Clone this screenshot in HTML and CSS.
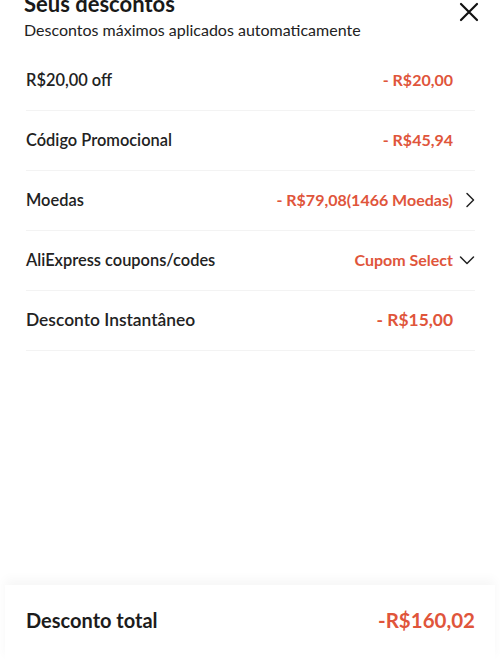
FILE: index.html
```html
<!DOCTYPE html>
<html lang="pt-BR">
<head>
<meta charset="utf-8">
<link rel="stylesheet" href="styles.css">
</head>
<body>
<div class="sheet">
  <header class="head">
    <div class="head-text">
      <h1 class="title">Seus descontos</h1>
      <p class="subtitle">Descontos máximos aplicados automaticamente</p>
    </div>
    <button class="close" aria-label="Fechar">
      <svg width="20" height="20" viewBox="0 0 20 20"><path d="M2 2 L18 18 M18 2 L2 18" stroke="#111" stroke-width="2.2" fill="none" stroke-linecap="round"/></svg>
    </button>
  </header>
  <main class="list">
    <div class="row">
      <span class="label">R$20,00 off</span>
      <span class="value">- R$20,00</span>
      <span class="icon"></span>
    </div>
    <div class="row">
      <span class="label">Código Promocional</span>
      <span class="value">- R$45,94</span>
      <span class="icon"></span>
    </div>
    <div class="row">
      <span class="label">Moedas</span>
      <span class="value">- R$79,08(1466 Moedas)</span>
      <span class="icon"><svg width="10" height="16" viewBox="0 0 10 16"><path d="M2 1.5 L8.5 8 L2 14.5" stroke="#222" stroke-width="1.5" fill="none" stroke-linecap="round" stroke-linejoin="round"/></svg></span>
    </div>
    <div class="row">
      <span class="label">AliExpress coupons/codes</span>
      <span class="value">Cupom Select</span>
      <span class="icon"><svg width="16" height="10" viewBox="0 0 16 10"><path d="M1.5 2 L8 8.5 L14.5 2" stroke="#222" stroke-width="1.5" fill="none" stroke-linecap="round" stroke-linejoin="round"/></svg></span>
    </div>
    <div class="row">
      <span class="label label-lg">Desconto Instantâneo</span>
      <span class="value value-lg">- R$15,00</span>
      <span class="icon"></span>
    </div>
  </main>
  <footer class="foot">
    <span class="foot-label">Desconto total</span>
    <span class="foot-value">-R$160,02</span>
  </footer>
</div>
</body>
</html>
```
FILE: styles.css
```css
* { box-sizing: border-box; }
html, body { margin: 0; padding: 0; background: #fff; }
body {
  font-family: "Lato", "Open Sans", "Liberation Sans", sans-serif;
  color: #222;
}
.sheet {
  width: 500px;
  height: 661px;
  display: flex;
  flex-direction: column;
  overflow: hidden;
}
.head {
  display: flex;
  justify-content: space-between;
  align-items: flex-start;
  padding: 0 20px 0 24px;
  margin-top: -8px;
}
.title {
  margin: 0;
  font-size: 22px;
  line-height: 24px;
  font-weight: 700;
  color: #191919;
}
.subtitle {
  margin: 3px 0 0;
  font-size: 16px;
  line-height: 22px;
  color: #222;
}
.close {
  border: 0;
  background: none;
  padding: 0;
  margin-top: 9px;
  width: 22px;
  height: 22px;
  display: flex;
  align-items: center;
  justify-content: center;
}
.list {
  flex: 1;
  padding: 10px 25px 0 26px;
}
.row {
  height: 60px;
  display: flex;
  align-items: center;
  border-bottom: 1px solid #f3f3f3;
  padding-bottom: 2px;
}
.label {
  flex: 1;
  font-size: 16.4px;
  font-weight: 600;
  color: #222;
}
.label-lg { font-size: 17.4px; }
.value {
  font-size: 16px;
  font-weight: 700;
  color: #e0553b;
}
.value-lg { font-size: 17.4px; }
.icon {
  width: 22px;
  display: flex;
  justify-content: flex-end;
  align-items: center;
}
.foot {
  height: 76px;
  margin: 0 5px;
  padding: 0 20px 6px 21px;
  display: flex;
  align-items: center;
  justify-content: space-between;
  box-shadow: 0 -6px 10px rgba(0,0,0,0.035);
  background: #fff;
}
.foot-label {
  font-size: 20px;
  font-weight: 700;
  color: #1c1c1c;
}
.foot-value {
  font-size: 20.5px;
  font-weight: 700;
  color: #e0553b;
}
```
